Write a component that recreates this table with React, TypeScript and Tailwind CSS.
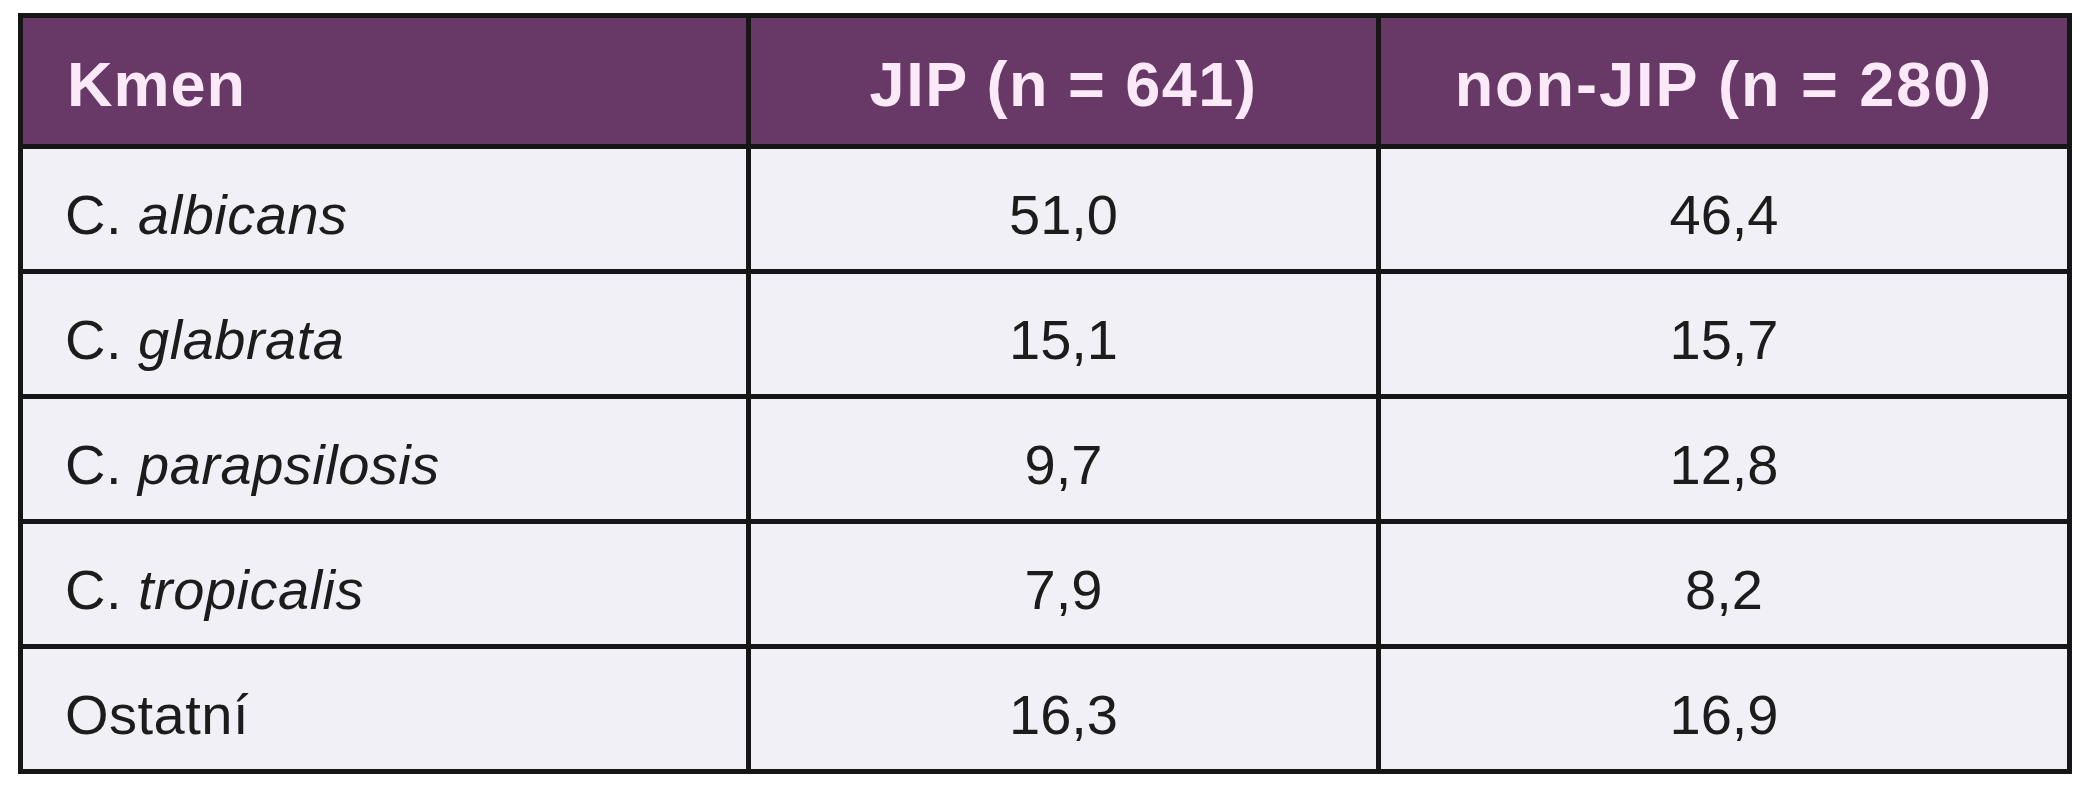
const rows = [
  { name: "C. albicans", italic: true, jip: "51,0", non: "46,4" },
  { name: "C. glabrata", italic: true, jip: "15,1", non: "15,7" },
  { name: "C. parapsilosis", italic: true, jip: "9,7", non: "12,8" },
  { name: "C. tropicalis", italic: true, jip: "7,9", non: "8,2" },
  { name: "Ostatní", italic: false, jip: "16,3", non: "16,9" },
];

function Species({ name, italic }: { name: string; italic: boolean }) {
  if (!italic) return <span>{name}</span>;
  const [genus, ...rest] = name.split(" ");
  return (
    <span>
      {genus} <i>{rest.join(" ")}</i>
    </span>
  );
}

export default function App() {
  return (
    <div className="min-h-[800px] bg-white pl-[18px] pt-[13px] font-['Liberation_Sans',Arial,sans-serif]">
      <div className="grid w-fit grid-cols-[723px_625px_686px] gap-[5px] bg-[#161616] p-[5px]">
        <div className="flex h-[126px] items-center bg-[#683867] pl-[44px] pt-[6px] text-[63px] font-bold tracking-[1px] text-[#fbe9f8]">
          Kmen
        </div>
        <div className="flex h-[126px] items-center justify-center bg-[#683867] pt-[6px] text-[63px] font-bold tracking-[1.5px] text-[#fbe9f8]">
          JIP (n = 641)
        </div>
        <div className="flex h-[126px] items-center justify-center bg-[#683867] pt-[6px] text-[63px] font-bold tracking-[2px] text-[#fbe9f8]">
          non-JIP (n = 280)
        </div>

        {rows.map((r) => (
          <div key={r.name} className="contents">
            <div className="flex h-[120px] items-center bg-[#f0f0f6] pl-[42px] pt-[12px] text-[56px] tracking-[0.5px] text-[#1c1c1c]">
              <Species name={r.name} italic={r.italic} />
            </div>
            <div className="flex h-[120px] items-center justify-center bg-[#f0f0f6] pt-[12px] text-[56px] text-[#1c1c1c]">
              {r.jip}
            </div>
            <div className="flex h-[120px] items-center justify-center bg-[#f0f0f6] pt-[12px] text-[56px] text-[#1c1c1c]">
              {r.non}
            </div>
          </div>
        ))}
      </div>
    </div>
  );
}
